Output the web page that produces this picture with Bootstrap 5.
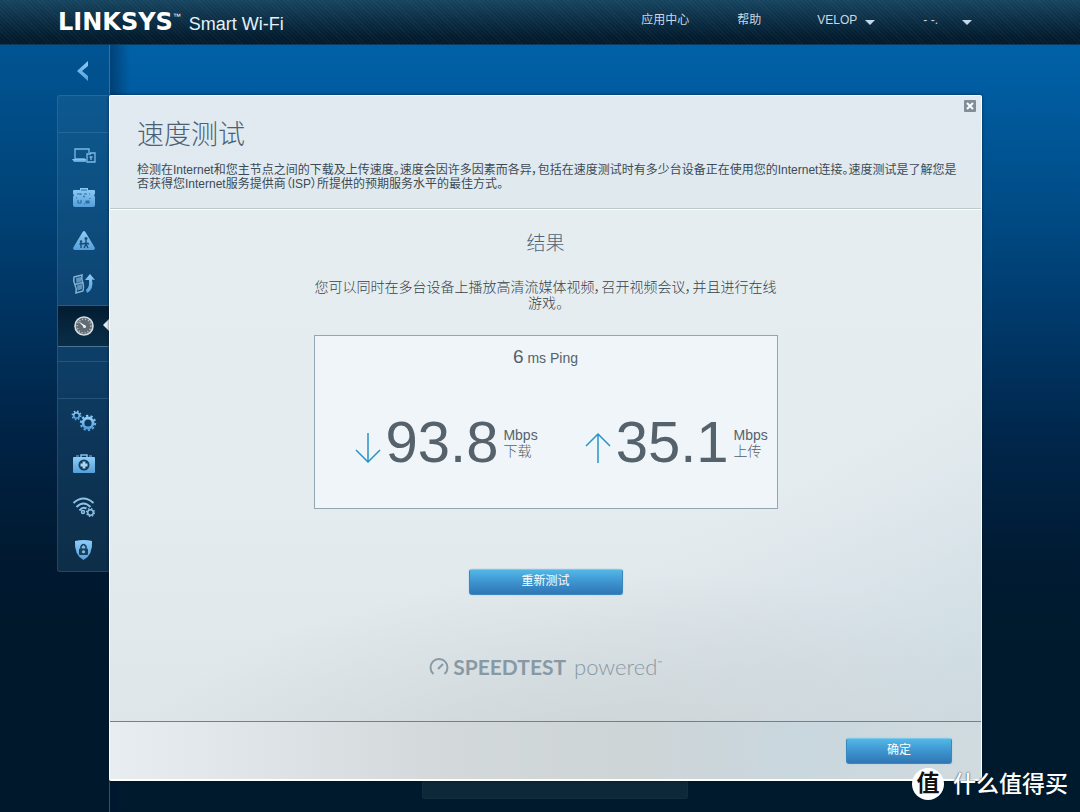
<!DOCTYPE html>
<html lang="zh-CN">
<head>
<meta charset="utf-8">
<meta name="viewport" content="width=device-width, initial-scale=1">
<title>Linksys Smart Wi-Fi - 速度测试</title>
<link href="https://cdn.jsdelivr.net/npm/bootstrap@5.3.0/dist/css/bootstrap.min.css" rel="stylesheet">
<style>
body{font-family:"Liberation Sans","Noto Sans CJK SC",sans-serif;font-size:12px;line-height:14px;color:#3d4a55;
  background:linear-gradient(#0061a8 45px,#005b9e 100px,#004d88 200px,#00396a 320px,#00264a 440px,#001b33 560px,#001a2d 640px) #001a2d no-repeat;}
.topbar{height:45px;padding:0 108px 0 58px;border-bottom:1px solid #0b3a5e;
  background:repeating-linear-gradient(45deg,rgba(255,255,255,.03) 0 1px,transparent 1px 3px),linear-gradient(#174560,#0b2c43 50%,#031c2f 85%,#041a29)}
.brand{color:#fff}
.brand-logo{font-family:"DejaVu Sans",sans-serif;font-weight:700;font-size:24px;line-height:28px}
.brand-tm{font-size:8px;line-height:10px}
.brand-sub{font-size:18px;line-height:32px;color:#e6f1f7}
.topnav{padding-top:12px}
.topbar a,.topbar button{color:#c9d8e2;font-size:12px;line-height:16px}
.caret{width:0;height:0;margin-top:4px;border:5px solid transparent;border-top-color:#c3d9ea;border-bottom:0}
.rail{width:110px;flex:none;background:rgba(0,20,40,.16);border-right:1px solid rgba(120,170,205,.4)}
.back{height:50px;padding:0 19px 0 0}
.side{width:52px;border:1px solid rgba(110,160,195,.22);border-right:0;border-radius:3px 0 0 3px;background:rgba(60,125,165,.22)}
.side .blank{height:37px;border-bottom:1px solid rgba(110,160,195,.25)}
.side a{height:43px}
.side .active{height:42px;background:linear-gradient(#021c31,#0a2e48);border-top:1px solid #31597a;border-bottom:1px solid #4a7493;position:relative}
.side .active::after{content:"";position:absolute;right:0;top:13px;border:6px solid transparent;border-right-color:#e6edf0;border-left:0}
.side svg{width:26px;height:24px}
.gap-row{height:15px;border-bottom:1px solid rgba(110,160,195,.25)}
.stage{padding:50px 98px 0 0;background:linear-gradient(90deg,rgba(0,20,50,.4),transparent) no-repeat 0 0/20px 100%}
.panel{border:1px solid #fff;border-bottom-width:2px;border-radius:2px;position:relative;margin-left:-1px;
  background:#e5ecf0;box-shadow:0 0 3px rgba(0,20,40,.7)}
.panel-head{height:113px;padding:23px 20px 0 27px;background:linear-gradient(#e1eaf1,#dfe9ee);border-bottom:1px solid #bccad0}
.panel-head h1{font-size:27px;line-height:32px;font-weight:300;color:#4c6070;margin:0 0 12px}
.palt{font-feature-settings:"palt"}
.thin{font-family:"Liberation Sans","Noto Sans CJK SC Light","Noto Sans CJK SC",sans-serif;font-weight:300}
.close-x{position:absolute;right:5px;top:4px;width:12px;height:12px;line-height:0}
.panel-body{height:512px;padding-top:23px;border-top:1px solid #fff;
  background:radial-gradient(ellipse 520px 230px at 60% 116%,#c8cfd2 0,rgba(207,215,218,.8) 45%,transparent 100%),linear-gradient(150deg,transparent 65%,rgba(196,214,223,.7) 100%),linear-gradient(#e6edf0,#e5ecef 55%,#dfe6ea)}
.panel-body h2{font-size:19px;line-height:22px;font-weight:300;color:#4d647b;margin:0 0 24px}
.msg{font-size:14px;line-height:16px;color:#35424c;margin:0 0 24px}
.result{width:464px;height:174px;border:1px solid #93a5b1;background:#eff5f8;color:#55626b}
.result,.msg{max-width:100%}
.ping{font-size:14px;line-height:22px;margin:10px 0 0}
.ping b{font-size:19px;font-weight:400}
.speeds{margin-top:43px;padding-left:39px;gap:46px}
.speed-num{font-size:58px;line-height:60px;margin:0 5px 0 4px}
.speed-unit{font-size:14px;line-height:16px;margin-top:15px}
.arrow{width:28px;height:30px;margin-top:21px}
.btn-blue{font-size:12px;line-height:14px;color:#fff;padding:4px 0 6px;border:1px solid #3a87bd;border-top-color:#7ac8ee;border-radius:3px;
  background:linear-gradient(#53b8e6,#3f97d2 45%,#2f76b4);box-shadow:0 0 2px #a9cde2}
.btn-blue:hover{color:#fff}
.retry{width:154px;margin-top:60px}
.ok{width:106px}
.powered{margin-top:59px;color:#8799a5;font-family:Lato,sans-serif;font-size:21px;line-height:26px}
.powered b{font-weight:700}
.powered .pw{font-weight:300;font-size:22px}
.powered small{font-size:6px;line-height:18px}
.panel-foot{height:58px;padding-right:29px;border-top:1px solid #738089;
  background:linear-gradient(90deg,#e7edf0,#dfe5e8 15%,#d3d9db 38%,#ced5d7 60%,#c9d7de 78%,#d0dbdf)}
.tab-hint{width:266px;height:18px;background:#0d2839;border:1px solid #142c3d;border-top:0;border-radius:0 0 3px 3px;margin:0 0 12px 312px}
.stamp{position:absolute;right:12px;bottom:11px;gap:9px;color:#fff;font-size:23px;line-height:34px;font-weight:500;text-shadow:0 0 2px #001a2d}
.stamp-dot{width:32px;height:32px;border-radius:50%;background:#fff;color:#111;font-size:23px;line-height:30px;font-weight:700;text-shadow:none;text-align:center}
</style>
</head>
<body class="min-vh-100 d-flex flex-column position-relative">
<svg width="0" height="0" class="position-absolute" aria-hidden="true"><defs>
<linearGradient id="ice" x1="0" y1="0" x2="0" y2="1"><stop offset="0" stop-color="#8fcdf8"/><stop offset="1" stop-color="#559fd9"/></linearGradient>
</defs></svg>

<header class="topbar d-flex align-items-start justify-content-between">
  <div class="brand d-flex align-items-start pt-2">
    <span class="brand-logo">LINKSYS</span><span class="brand-tm me-2 mt-1">™</span>
    <span class="brand-sub">Smart Wi-Fi</span>
  </div>
  <nav class="topnav d-flex align-items-center" aria-label="主导航">
    <a href="#" class="text-decoration-none me-5">应用中心</a>
    <a href="#" class="text-decoration-none me-5">帮助</a>
    <button type="button" class="btn p-0 border-0 d-flex align-items-center gap-2 me-5 ms-2">VELOP <span class="caret"></span></button>
    <button type="button" class="btn p-0 border-0 d-flex align-items-center gap-4" aria-label="账户">- -. <span class="caret"></span></button>
  </nav>
</header>

<div class="d-flex flex-grow-1">
  <aside class="rail d-flex flex-column align-items-end">
    <button type="button" class="btn back border-0" aria-label="返回"><svg width="14" height="22" viewBox="0 0 14 22"><path d="M12 1v5L6 11l6 5v5L1 11z" fill="url(#ice)"/></svg></button>
    <nav class="side" aria-label="工具">
      <div class="blank"></div>
      <a href="#" class="d-flex align-items-center justify-content-center" aria-label="设备列表"><svg viewBox="0 0 26 24"><g fill="none" stroke="#7db9e4" stroke-width="1.3"><path d="M4 16V6h14v4M4 16h10M16 16v-5h4M19 10h5v9h-8v-3"/><path d="M20 14v3M18.500 14h3"/></g><path d="M1 16h14v3H3z" fill="url(#ice)"/></svg></a>
      <a href="#" class="d-flex align-items-center justify-content-center" aria-label="访客"><svg viewBox="0 0 26 24"><path d="M2 5q0-1 1-1h6V2h8v2h6q1 0 1 1v3l-1 1 1 2v8q0 2-2 2H4q-2 0-2-2v-8l1-2-1-1z" fill="url(#ice)"/><g stroke="#2f6d9f" fill="none" stroke-width="1.2"><path d="M10 4h6M6 8h4v1M13 8h3M7 14v3h3v-3M12 10l2 1M18 8h1M19 12v1M5 12h1M13 18h1"/><path d="M15 15h3v2h-3z" fill="#2f6d9f"/></g></svg></a>
      <a href="#" class="d-flex align-items-center justify-content-center" aria-label="家长控制"><svg viewBox="0 0 26 24"><path d="M13 2q1 0 2 2l9 15q0 2-2 2H4q-2 0-2-2l9-15q1-2 2-2z" fill="url(#ice)"/><g fill="none" stroke="#1c4c76" stroke-width="1.4"><path d="M10 14v5M8.500 15.500l1.500-1.500 2 1 3-1 3 1M15 11v4l-2 4M15 15l2 4"/></g><circle cx="15" cy="9.500" r="1.500" fill="#1c4c76"/><circle cx="10" cy="12.500" r="1.200" fill="#1c4c76"/></svg></a>
      <a href="#" class="d-flex align-items-center justify-content-center" aria-label="优先级"><svg viewBox="0 0 26 24"><g fill="none" stroke="#82b4d6" stroke-width="1.500"><path d="M3 5l8-2q-1 4 1 8 1 5 0 8l-7 2q1-4-1-8-2-4-1-8zM4 12.500l8-2"/></g><path d="M5 6l5-1 .5 4.500-5 1.500zM6 13.500l5-1.500v5l-4.500 1.500z" fill="#5e93bb"/><path d="M14 8l5-6 5 6-3-.5q2 10-5 13.500l-1-3q4-3 3-10z" fill="url(#ice)"/></svg></a>
      <a href="#" class="active d-flex align-items-center justify-content-center" aria-label="速度测试" aria-current="page"><svg viewBox="0 0 26 24"><circle cx="13" cy="12" r="9" fill="#626b72" stroke="#d5dde2" stroke-width="1.600"/><circle cx="13" cy="12" r="6.800" fill="none" stroke="#c3cdd3" stroke-width="1.500" stroke-dasharray="1 2"/><path d="M7 7l7 4.500-1 1.500z" fill="#fff"/><circle cx="13.500" cy="12.500" r="1.500" fill="#f0f4f6"/></svg></a>
      <div class="gap-row"></div>
      <div class="blank"></div>
      <a href="#" class="d-flex align-items-center justify-content-center" aria-label="连接"><svg viewBox="0 0 26 24"><g fill="none" stroke="url(#ice)"><circle cx="5.500" cy="6.500" r="2.800" stroke-width="1.600"/><circle cx="5.500" cy="6.500" r="4.200" stroke-width="1.600" stroke-dasharray="1.600 1.700"/><circle cx="17" cy="14" r="5" stroke-width="2.800"/><circle cx="17" cy="14" r="7.200" stroke-width="2" stroke-dasharray="2.300 2.224"/></g></svg></a>
      <a href="#" class="d-flex align-items-center justify-content-center" aria-label="故障排除"><svg viewBox="0 0 26 24"><path d="M10 5V3h6v2" fill="none" stroke="#83bee6" stroke-width="1.500"/><rect x="2" y="5" width="22" height="16" rx="1" fill="url(#ice)"/><path d="M5 4h3M18 4h3" stroke="#83bee6"/><circle cx="13" cy="13" r="5.500" fill="#123b5c"/><path d="M13 9.500v7M9.500 13h7" stroke="#a9d5f0" stroke-width="2.800"/></svg></a>
      <a href="#" class="d-flex align-items-center justify-content-center" aria-label="无线"><svg viewBox="0 0 26 24"><g fill="none" stroke="#8fc3e6" stroke-width="2"><path d="M2.500 8q10-9 20 0M5.500 12q7-7 14 0M8.500 15.500q3-4 7-2"/><circle cx="12" cy="17" r="1.500" stroke-width="1.500"/><circle cx="19.500" cy="17.500" r="2.800" stroke-width="1.500"/><circle cx="19.500" cy="17.500" r="4" stroke-width="1.200" stroke-dasharray="1.500 1.640"/></g></svg></a>
      <a href="#" class="d-flex align-items-center justify-content-center" aria-label="安全"><svg viewBox="0 0 26 24"><path d="M4 3q9-2 17 0 1 14-8.500 19Q3 17 4 3z" fill="url(#ice)"/><path d="M10 11V8.500q2.500-4 5 0V11" fill="none" stroke="#16415f" stroke-width="1.500"/><rect x="8" y="10.500" width="9" height="6.500" rx="1" fill="#16415f"/><circle cx="12.500" cy="13.800" r="1.500" fill="#8fc3e6"/></svg></a>
    </nav>
  </aside>

  <main class="stage flex-grow-1">
    <section class="panel">
      <button type="button" class="btn p-0 border-0 close-x" aria-label="关闭"><svg width="12" height="12" viewBox="0 0 12 12"><rect width="12" height="12" rx="1" fill="#7f8e99"/><path d="M3 3l6 6M9 3l-6 6" stroke="#fff" stroke-width="2"/></svg></button>
      <div class="panel-head">
        <h1 class="thin">速度测试</h1>
        <p class="palt m-0">检测在Internet和您主节点之间的下载及上传速度。速度会因许多因素而各异，包括在速度测试时有多少台设备正在使用您的Internet连接。速度测试是了解您是否获得您Internet服务提供商（ISP）所提供的预期服务水平的最佳方式。</p>
      </div>
      <div class="panel-body d-flex flex-column align-items-center">
        <h2 class="thin">结果</h2>
        <p class="msg palt thin text-center">您可以同时在多台设备上播放高清流媒体视频，召开视频会议，并且进行在线<br>游戏。</p>
        <div class="result">
          <p class="ping text-center"><b>6</b> ms Ping</p>
          <div class="speeds d-flex">
            <div class="d-flex align-items-start">
              <svg class="arrow" viewBox="0 0 28 30"><path d="M14 0v29M2 17l12 12 12-12" fill="none" stroke="#2a94c9" stroke-width="1.500"/></svg>
              <span class="speed-num">93.8</span>
              <span class="speed-unit">Mbps<br><span class="thin">下载</span></span>
            </div>
            <div class="d-flex align-items-start">
              <svg class="arrow" viewBox="0 0 28 30"><path d="M14 30V1M2 13L14 1l12 12" fill="none" stroke="#2a94c9" stroke-width="1.500"/></svg>
              <span class="speed-num">35.1</span>
              <span class="speed-unit">Mbps<br><span class="thin">上传</span></span>
            </div>
          </div>
        </div>
        <button type="button" class="btn btn-blue retry">重新测试</button>
        <div class="powered d-flex align-items-center">
          <svg class="me-1" width="20" height="20" viewBox="0 0 20 20"><path d="M4.500 17A8.500 8.500 0 1 1 15.500 17M9 12l5-5" fill="none" stroke="#8799a5" stroke-width="2"/></svg>
          <b>SPEEDTEST</b><span class="pw ms-2">powered</span><small class="align-self-start">™</small>
        </div>
      </div>
      <div class="panel-foot d-flex align-items-center justify-content-end">
        <button type="button" class="btn btn-blue ok">确定</button>
      </div>
    </section>
    <div class="tab-hint"></div>
  </main>
</div>
<div class="stamp d-flex align-items-center"><span class="stamp-dot">值</span><span>什么值得买</span></div>
<script src="https://cdn.jsdelivr.net/npm/bootstrap@5.3.0/dist/js/bootstrap.bundle.min.js"></script>
</body>
</html>
